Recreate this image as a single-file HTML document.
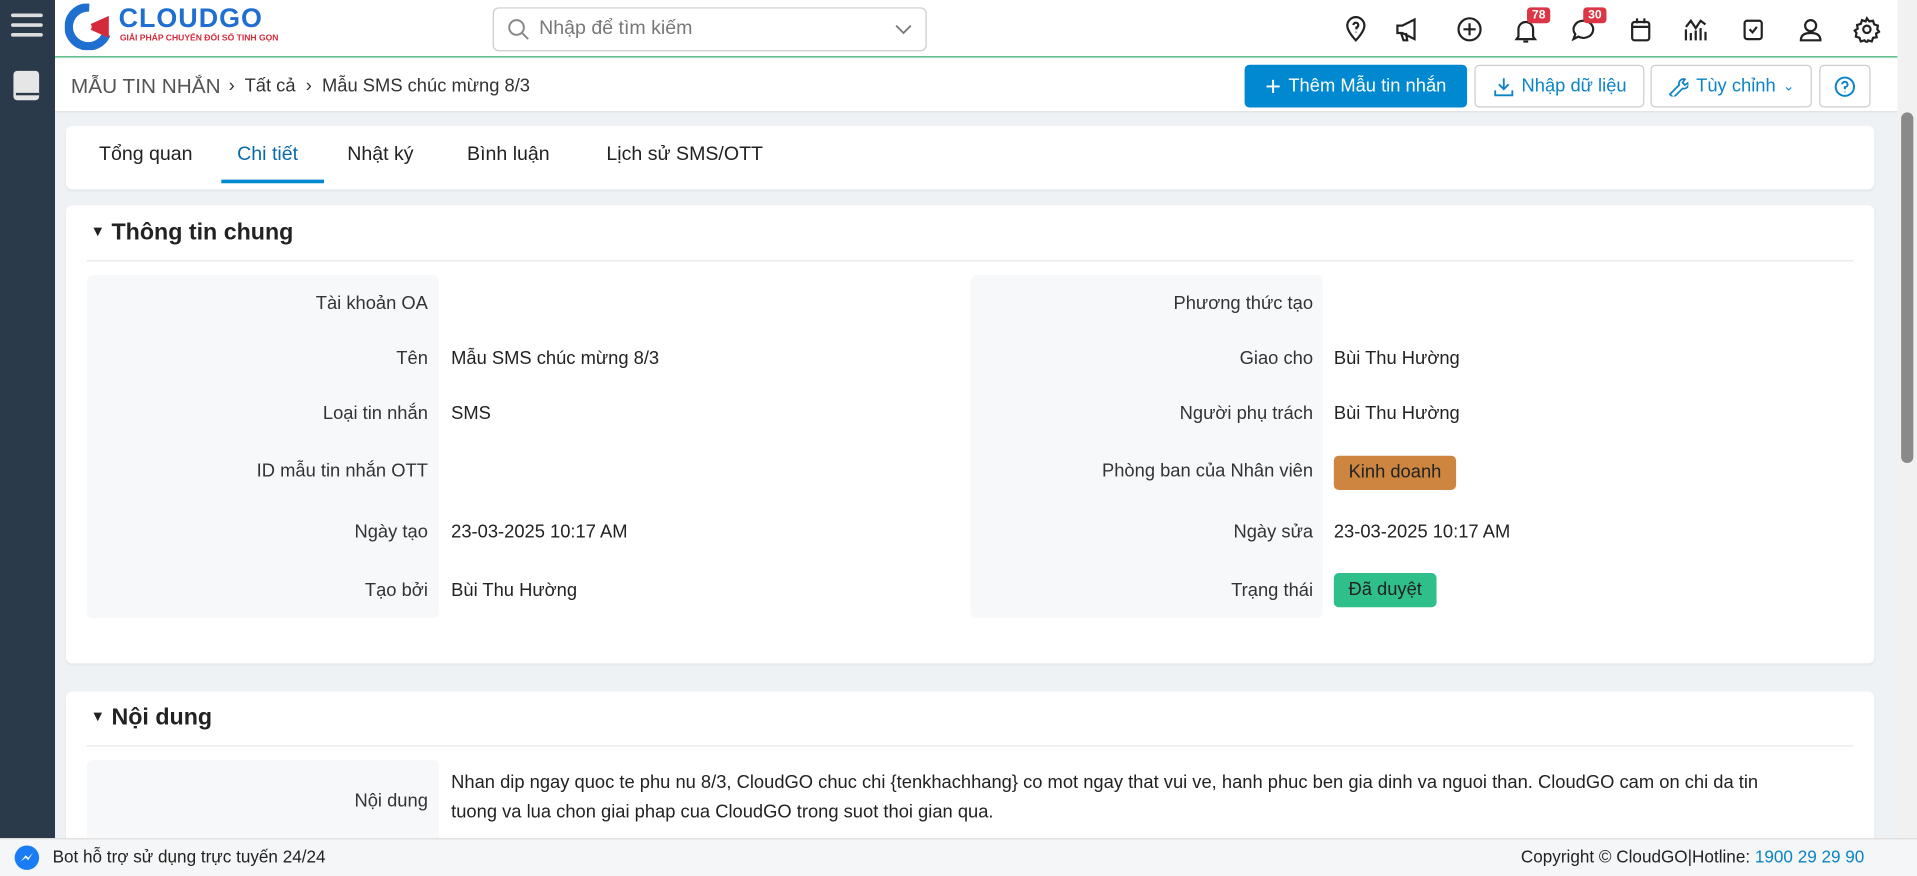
<!DOCTYPE html>
<html><head><meta charset="utf-8"><style>
*{box-sizing:border-box;margin:0;padding:0}
html,body{width:1917px;height:876px;overflow:hidden;background:#f0f2f5}
#w{width:1568px;height:717px;transform:scale(1.22258,1.2218);transform-origin:0 0;position:relative;font-family:"Liberation Sans","Noto Sans CJK SC",sans-serif;color:#222;font-size:15px;background:#eff2f5}
.a{position:absolute}
.side{left:0;top:0;width:45px;height:686px;background:#2b3a4a}
.top{left:45px;top:0;width:1507px;height:47px;background:#fff;border-bottom:1px solid #3cb371}
.bc{left:45px;top:48px;width:1507px;height:44px;background:#fff;border-bottom:1px solid #ddd}
.card{background:#fff;border-radius:5px;box-shadow:0 1px 2px rgba(0,0,0,.06)}
.btn{border:1px solid #ccc;border-radius:4px;background:#fff;color:#0a84c6;font-size:15px;display:flex;align-items:center;justify-content:center;gap:6px}
.lab{text-align:right;width:280px;font-size:15px;color:#333}
.val{font-size:15px;color:#222}
.ic{width:22px;height:22px;fill:none;stroke:#222;stroke-width:1.8}
.badge{background:#dc3545;color:#fff;font-size:10px;font-weight:bold;border-radius:3px;padding:1px 4px}
.tab{font-size:16px;color:#222;top:15px}
</style></head><body><div id="w">
<div class="a side">
 <div class="a" style="left:9px;top:11px;width:26px;height:3px;background:#ddd;box-shadow:0 8px 0 #ddd,0 16px 0 #ddd;border-radius:2px"></div>
 <div class="a" style="left:11px;top:58px;width:21px;height:24px;background:#e6e6e6;border-radius:3px"></div>
 <div class="a" style="left:13px;top:76px;width:19px;height:2px;background:#2b3a4a"></div>
</div>
<div class="a top">
 <svg class="a" style="left:8px;top:3px" width="40" height="38" viewBox="0 0 40 38"><path d="M20 3a16 16 0 1 0 14 22" stroke="#1f6fd1" stroke-width="7" fill="none"/><path d="M16 19l20-9v18z" fill="#d42a3a"/><circle cx="19" cy="19" r="3" fill="#fff"/></svg>
 <div class="a" style="left:52px;top:2px;font-weight:bold;font-size:22px;color:#1f6fd1;letter-spacing:.8px">CLOUDGO</div>
 <div class="a" style="left:53px;top:28px;font-size:7px;color:#d42a3a;font-weight:bold">GIẢI PHÁP CHUYỂN ĐỔI SỐ TINH GỌN</div>
 <div class="a" style="left:358px;top:6px;width:355px;height:36px;border:1px solid #ccc;border-radius:5px">
  <svg class="a" style="left:11px;top:8px" width="18" height="18" viewBox="0 0 18 18"><circle cx="7.5" cy="7.5" r="6" stroke="#888" stroke-width="1.6" fill="none"/><path d="M12 12l5 5" stroke="#888" stroke-width="1.6"/></svg>
  <div class="a" style="left:37px;top:8px;color:#777;font-size:16px">Nhập để tìm kiếm</div>
  <svg class="a" style="left:328px;top:12px" width="14" height="10"><path d="M1 2l6 6 6-6" stroke="#777" stroke-width="1.5" fill="none"/></svg>
 </div>
 <svg class="a ic" style="left:1053px;top:13px" viewBox="0 0 22 22"><path d="M11 20s-7-7-7-12a7 7 0 0 1 14 0c0 5-7 12-7 12z"/><path d="M9 7.5a2 2 0 1 1 2.5 2v1.5M11 13v.5"/></svg>
 <svg class="a ic" style="left:1095px;top:13px" viewBox="0 0 22 22"><path d="M3 8h4l10-5v16L7 14H3zM6 14l2 6h3l-1-6"/></svg>
 <svg class="a ic" style="left:1146px;top:13px" viewBox="0 0 22 22"><circle cx="11" cy="11" r="9"/><path d="M11 6v10M6 11h10"/></svg>
 <svg class="a ic" style="left:1192px;top:14px" viewBox="0 0 22 22"><path d="M5 16V10a6 6 0 0 1 12 0v6l1.5 2h-15zM9 20h4"/></svg>
 <div class="a badge" style="left:1204px;top:6px">78</div>
 <svg class="a ic" style="left:1239px;top:14px" viewBox="0 0 22 22"><path d="M11 3a8 7 0 1 1-4 13l-4 2 1.5-4A8 7 0 0 1 11 3z"/></svg>
 <div class="a badge" style="left:1250px;top:6px">30</div>
 <svg class="a ic" style="left:1286px;top:13px" viewBox="0 0 22 22"><rect x="4" y="5" width="14" height="15" rx="2"/><path d="M4 9h14M8 2v4M14 2v4"/></svg>
 <svg class="a ic" style="left:1331px;top:13px" viewBox="0 0 22 22"><path d="M3 20v-9M7 20v-6M11 20v-8M15 20v-10M19 20v-7M3 9l4-5 4 6 4-6 4 3"/></svg>
 <svg class="a ic" style="left:1378px;top:13px" viewBox="0 0 22 22"><rect x="4" y="4" width="14" height="15" rx="2"/><path d="M8 11l2.5 2.5L14 9"/></svg>
 <svg class="a ic" style="left:1425px;top:13px" viewBox="0 0 22 22"><circle cx="11" cy="8" r="4.5"/><path d="M3 20c0-5 4-6 8-6s8 1 8 6z"/></svg>
 <svg class="a ic" style="left:1471px;top:13px" viewBox="0 0 22 22"><circle cx="11" cy="11" r="3"/><path d="M11 2l2 2.5 3-.5 1 3 3 1-.5 3L21 13l-2.5 1.5.5 3-3 .5-1 3-3-1L11 22l-2-2-3 1-1-3-3-1 .5-3L1 12l2.5-1.5-.5-3 3-1 1-3 3 1z"/></svg>
</div>
<div class="a bc">
 <div class="a" style="left:13px;top:13px;font-size:17px;color:#555">MẪU TIN NHẮN</div>
 <div class="a" style="left:142px;top:14px;font-size:15px;color:#333">›&nbsp; Tất cả &nbsp;›&nbsp; Mẫu SMS chúc mừng 8/3</div>
 <div class="a btn" style="left:973px;top:5px;width:182px;height:35px;background:#0089d0;border-color:#0089d0;color:#fff"><span style="font-size:22px;font-weight:300">+</span>Thêm Mẫu tin nhắn</div>
 <div class="a btn" style="left:1161px;top:5px;width:139px;height:35px"><svg width="18" height="18" viewBox="0 0 18 18" fill="none" stroke="#0a84c6" stroke-width="1.5"><path d="M9 2v9M5 7l4 4 4-4M2 12v4h14v-4"/></svg>Nhập dữ liệu</div>
 <div class="a btn" style="left:1305px;top:5px;width:132px;height:35px"><svg width="17" height="17" viewBox="0 0 18 18" fill="none" stroke="#0a84c6" stroke-width="1.5"><path d="M2 16l8-8a4 4 0 0 1 5-5l-2 3 2 2 3-2a4 4 0 0 1-5 5l-8 8z"/></svg>Tùy chỉnh <span style="font-size:11px">&#8964;</span></div>
 <div class="a btn" style="left:1443px;top:5px;width:42px;height:35px"><svg width="18" height="18" viewBox="0 0 18 18" fill="none" stroke="#0a84c6" stroke-width="1.6"><circle cx="9" cy="9" r="7.5"/><path d="M6.8 7a2.2 2.2 0 1 1 2.2 2.3V11M9 13v.5"/></svg></div>
</div>
<div class="a" style="left:1552px;top:0;width:16px;height:686px;background:#f1f1f1"></div>
<div class="a" style="left:1555px;top:92px;width:10px;height:287px;background:#8a8a8a;border-radius:5px"></div>
<div class="a card" style="left:54px;top:103px;width:1479px;height:52px">
 <div class="a tab" style="left:27px">Tổng quan</div>
 <div class="a tab" style="left:140px;color:#0a6aa8">Chi tiết</div>
 <div class="a" style="left:127px;top:44px;width:84px;height:3px;background:#0089d0"></div>
 <div class="a tab" style="left:230px">Nhật ký</div>
 <div class="a tab" style="left:328px">Bình luận</div>
 <div class="a tab" style="left:442px">Lịch sử SMS/OTT</div>
</div>
<div class="a card" style="left:54px;top:168px;width:1479px;height:375px">
 <div class="a" style="left:20px;top:12px;font-size:19px;font-weight:bold;color:#222"><span style="font-size:12px;vertical-align:3px">▼</span> Thông tin chung</div>
 <div class="a" style="left:17px;top:45px;width:1445px;height:1px;background:#e6e6e6"></div>
 <div class="a" style="left:17px;top:57px;width:288px;height:281px;background:#f7f8fa;border-radius:5px"></div>
 <div class="a" style="left:740px;top:57px;width:288px;height:281px;background:#f7f8fa;border-radius:5px"></div>
</div>
<div class="a lab" style="left:70px;top:240px">Tài khoản OA</div>
<div class="a lab" style="left:70px;top:285px">Tên</div><div class="a val" style="left:369px;top:285px">Mẫu SMS chúc mừng 8/3</div>
<div class="a lab" style="left:70px;top:330px">Loại tin nhắn</div><div class="a val" style="left:369px;top:330px">SMS</div>
<div class="a lab" style="left:70px;top:377px">ID mẫu tin nhắn OTT</div>
<div class="a lab" style="left:70px;top:427px">Ngày tạo</div><div class="a val" style="left:369px;top:427px">23-03-2025 10:17 AM</div>
<div class="a lab" style="left:70px;top:475px">Tạo bởi</div><div class="a val" style="left:369px;top:475px">Bùi Thu Hường</div>
<div class="a lab" style="left:794px;top:240px">Phương thức tạo</div>
<div class="a lab" style="left:794px;top:285px">Giao cho</div><div class="a val" style="left:1091px;top:285px">Bùi Thu Hường</div>
<div class="a lab" style="left:794px;top:330px">Người phụ trách</div><div class="a val" style="left:1091px;top:330px">Bùi Thu Hường</div>
<div class="a lab" style="left:794px;top:377px">Phòng ban của Nhân viên</div><div class="a val" style="left:1091px;top:373px;height:28px;width:100px;background:#cd853f;border-radius:4px;text-align:center;line-height:28px">Kinh doanh</div>
<div class="a lab" style="left:794px;top:427px">Ngày sửa</div><div class="a val" style="left:1091px;top:427px">23-03-2025 10:17 AM</div>
<div class="a lab" style="left:794px;top:475px">Trạng thái</div><div class="a val" style="left:1091px;top:469px;height:28px;width:84px;background:#2ebf8b;border-radius:4px;text-align:center;line-height:28px">Đã duyệt</div>
<div class="a card" style="left:54px;top:566px;width:1479px;height:130px">
 <div class="a" style="left:20px;top:11px;font-size:19px;font-weight:bold;color:#222"><span style="font-size:12px;vertical-align:3px">▼</span> Nội dung</div>
 <div class="a" style="left:17px;top:44px;width:1445px;height:1px;background:#e6e6e6"></div>
 <div class="a" style="left:17px;top:56px;width:288px;height:80px;background:#f7f8fa;border-radius:5px"></div>
</div>
<div class="a lab" style="left:70px;top:647px">Nội dung</div>
<div class="a val" style="left:369px;top:629px;width:1100px;line-height:24px">Nhan dip ngay quoc te phu nu 8/3, CloudGO chuc chi {tenkhachhang} co mot ngay that vui ve, hanh phuc ben gia dinh va nguoi than. CloudGO cam on chi da tin tuong va lua chon giai phap cua CloudGO trong suot thoi gian qua.</div>
<div class="a" style="left:0;top:686px;width:1568px;height:31px;background:#f5f6f7;border-top:1px solid #ddd">
 <div class="a" style="left:12px;top:5px;width:20px;height:20px;border-radius:50%;background:#1a7cf5"></div>
 <svg class="a" style="left:16px;top:10px" width="12" height="10"><path d="M1 8l4-5 2 2 4-4-4 6-2-2z" fill="#fff"/></svg>
 <div class="a" style="left:43px;top:6px;font-size:14px;color:#222">Bot hỗ trợ sử dụng trực tuyến 24/24</div>
 <div class="a" style="left:1244px;top:6px;font-size:14px;color:#222">Copyright © CloudGO|Hotline: <span style="color:#0a84c6">1900 29 29 90</span></div>
</div>
</div></body></html>
